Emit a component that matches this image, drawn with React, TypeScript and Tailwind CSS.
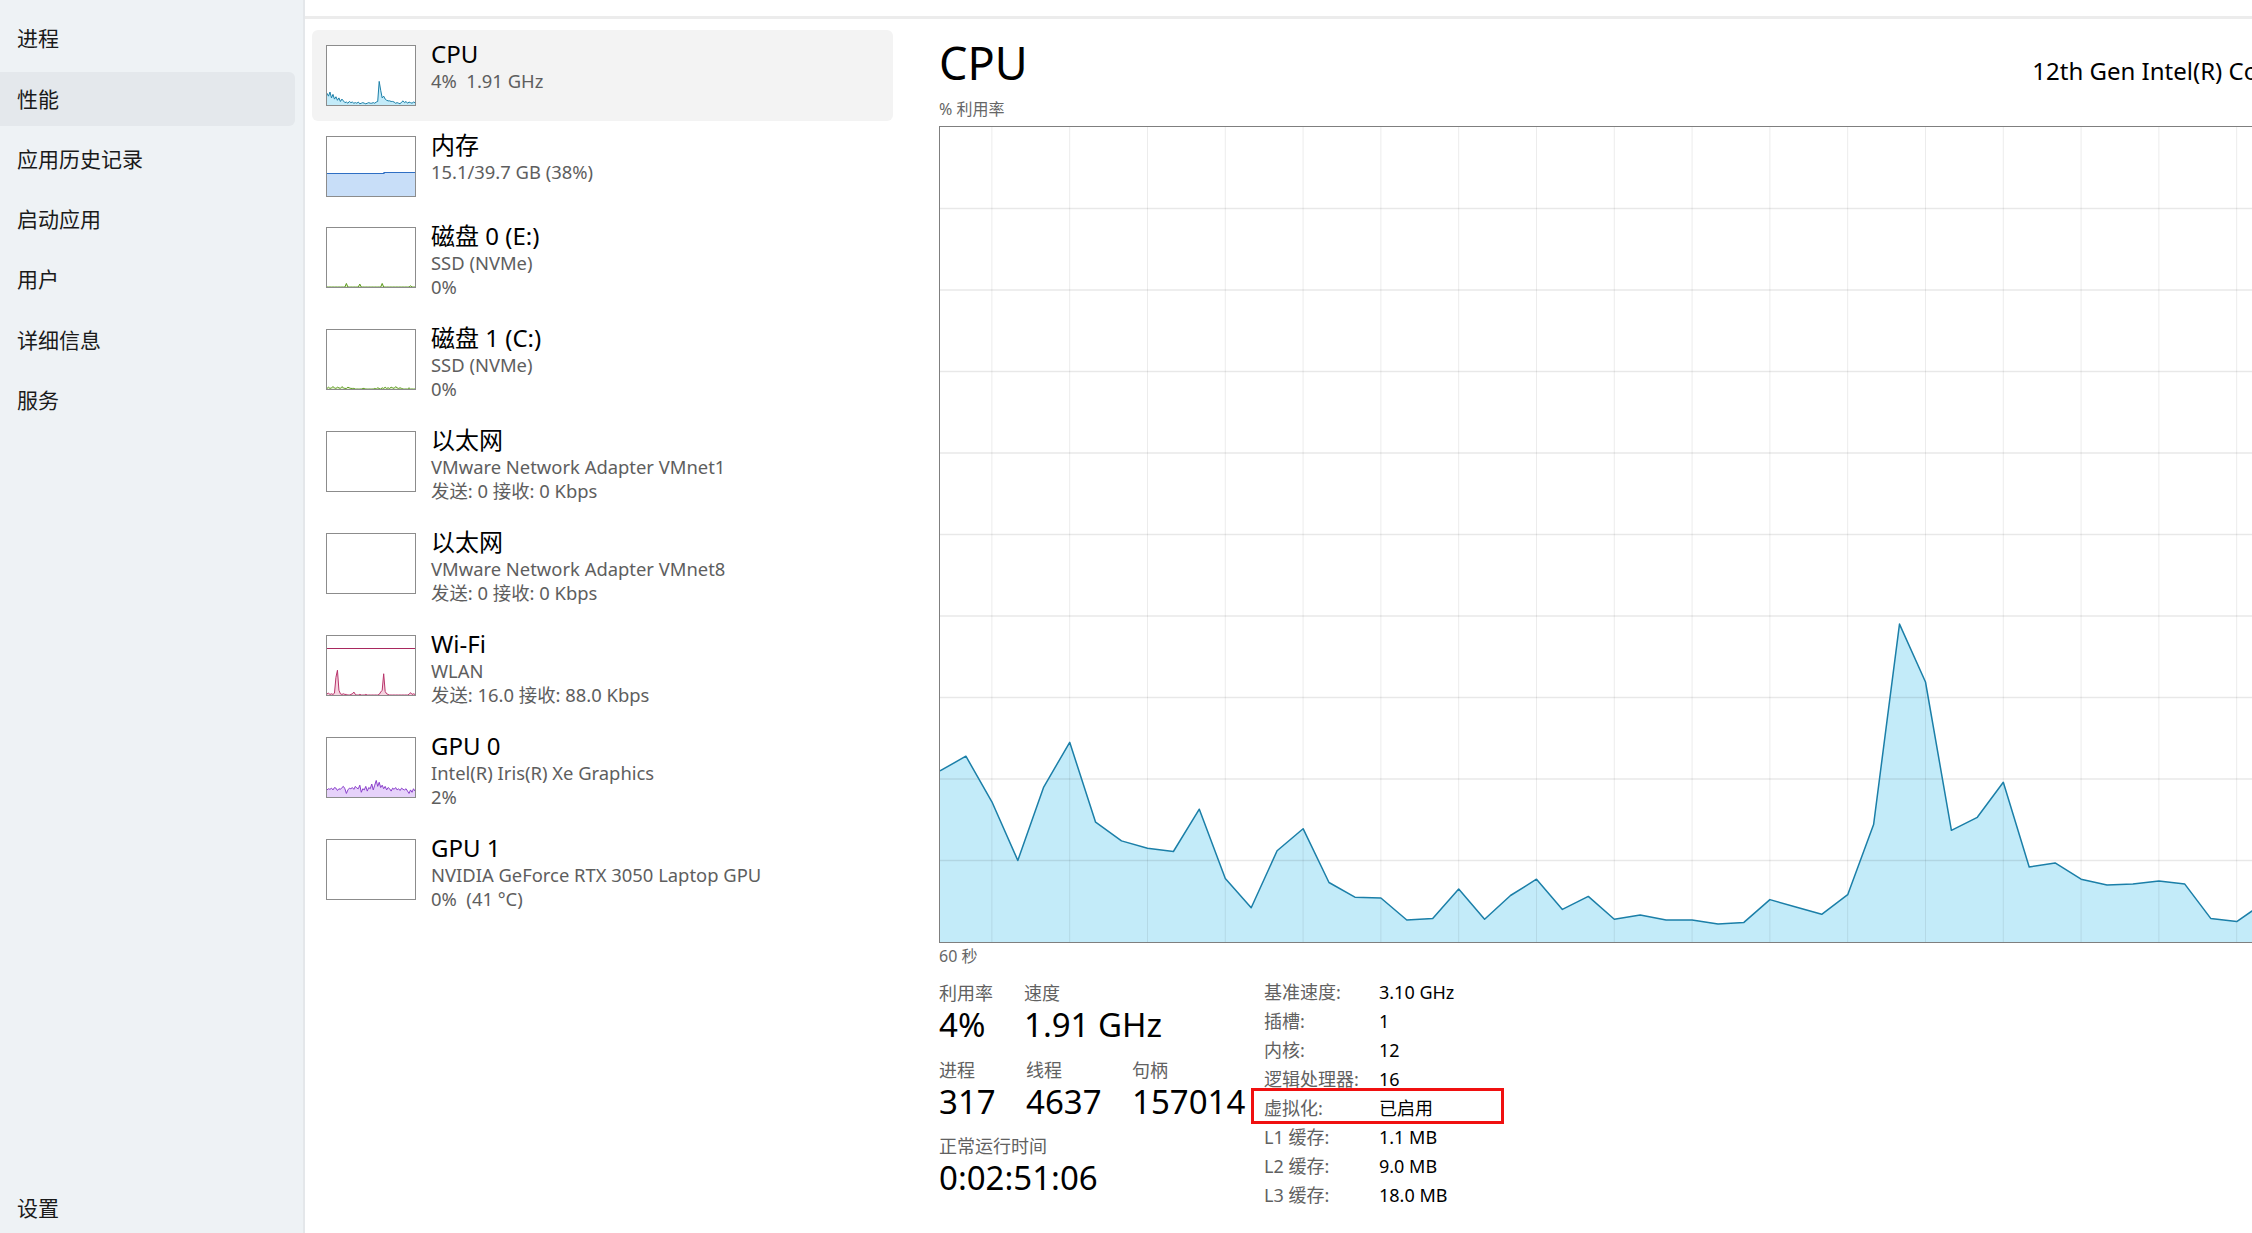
import React from "react";

const navItems = ["进程", "性能", "应用历史记录", "启动应用", "用户", "详细信息", "服务"];

// cpu history, one value per second (percent)
const cpuHistory = [
  21.0, 22.8, 17.2, 10.0, 19.0, 24.5, 14.7, 12.4, 11.5, 11.1, 16.3, 7.8, 4.2, 11.2, 13.9, 7.3, 5.5, 5.4, 2.7, 2.9,
  6.5, 2.8, 5.7, 7.7, 4.0, 5.6, 2.8, 3.3, 2.7, 2.7, 2.2, 2.4, 5.2, 4.3, 3.4, 5.8, 14.4, 39.0, 31.9, 13.7,
  15.3, 19.6, 9.2, 9.7, 7.7, 7.0, 7.1, 7.5, 7.1, 2.9, 2.5, 4.7, 4.2, 3.8, 5.5, 4.1, 3.6, 4.8, 5.2, 4.4, 4.0,
];

const cpuThumb = [
  20, 15, 22, 12, 18, 10, 14, 8, 12, 6, 10, 7, 4, 5, 3, 6, 4, 5, 3, 4, 3, 5, 2, 3, 4, 3, 2, 3, 4, 3, 3, 4, 3, 5, 6, 40,
  25, 12, 15, 10, 8, 7, 7, 6, 6, 5, 3, 4, 3, 2, 5, 7, 4, 6, 3, 5, 4, 3, 5, 4,
];
const gpuThumb = [
  12, 14, 13, 15, 12, 16, 15, 11, 14, 13, 16, 18, 14, 6, 12, 15, 14, 16, 13, 18, 15, 14, 20, 8, 14, 12, 18, 10, 16, 14,
  22, 12, 20, 28, 18, 25, 16, 20, 14, 18, 12, 16, 14, 10, 15, 13, 16, 12, 14, 11, 15, 13, 12, 14, 10, 6, 12, 8, 14, 10,
];
const disk0Thumb = [
  0, 0, 0, 0, 0, 0, 0, 0, 0, 0, 0, 0, 0, 6, 0, 0, 0, 0, 0, 0, 0, 0, 5, 0, 0, 0, 0, 0, 0, 0, 0, 0, 0, 0, 0, 0, 0, 6, 0, 0,
  0, 0, 0, 0, 0, 0, 0, 0, 0, 0, 0, 0, 0, 0, 0, 0, 2, 0, 0, 0,
];
const disk1Thumb = [
  1, 3, 1, 2, 4, 2, 1, 3, 2, 1, 4, 2, 1, 1, 3, 2, 1, 1, 1, 0, 0, 0, 0, 0, 1, 1, 0, 0, 0, 0, 0, 0, 1, 0, 2, 1, 0, 2, 1, 3,
  1, 2, 1, 3, 2, 1, 4, 2, 1, 2, 1, 0, 0, 0, 0, 2, 0, 0, 0, 0,
];
const wifiThumb = [
  2, 3, 1, 2, 1, 3, 30, 42, 8, 2, 1, 2, 1, 1, 0, 0, 1, 2, 5, 1, 0, 0, 1, 0, 0, 0, 1, 0, 0, 0, 0, 0, 0, 0, 0, 1, 5, 8,
  36, 6, 2, 1, 0, 0, 0, 0, 0, 0, 0, 0, 0, 0, 0, 0, 0, 1, 4, 1, 2, 1,
];

function MiniChart({ values, stroke, fill, top }: { values?: number[]; stroke?: string; fill?: string; top?: string }) {
  const w = 88;
  const h = 59;
  const pts = values ? values.map((v, i) => `${((i / (values.length - 1)) * w).toFixed(2)},${(h - (v / 100) * h).toFixed(2)}`) : [];
  return (
    <div className="mt-[6px] h-[61px] w-[90px] shrink-0 border border-[#8c8c8c] bg-white">
      <svg width={w} height={h} viewBox={`0 0 ${w} ${h}`} className="block">
        {top && <line x1={0} y1={12.5} x2={w} y2={12.5} stroke={top} strokeWidth={1} />}
        {values && (
          <>
            <polygon points={`0,${h} ${pts.join(" ")} ${w},${h}`} fill={fill} />
            <polyline points={pts.join(" ")} fill="none" stroke={stroke} strokeWidth={1} />
          </>
        )}
      </svg>
    </div>
  );
}

function MemoryThumb() {
  return (
    <div className="mt-[6px] h-[61px] w-[90px] shrink-0 border border-[#8c8c8c] bg-white">
      <svg width={88} height={59} viewBox="0 0 88 59" className="block">
        <polygon points="0,36.5 57,36.5 57,35.5 88,35.5 88,59 0,59" fill="#c8def8" />
        <polyline points="0,36.5 57,36.5 57,35.5 88,35.5" fill="none" stroke="#2f6fc4" strokeWidth={1.2} />
      </svg>
    </div>
  );
}

type Device = { title: string; lines: string[]; thumb: React.ReactNode; active?: boolean };

const devices: Device[] = [
  { title: "CPU", lines: ["4%  1.91 GHz"], thumb: <MiniChart values={cpuThumb} stroke="#1b7fa8" fill="#c3ebf9" />, active: true },
  { title: "内存", lines: ["15.1/39.7 GB (38%)"], thumb: <MemoryThumb /> },
  { title: "磁盘 0 (E:)", lines: ["SSD (NVMe)", "0%"], thumb: <MiniChart values={disk0Thumb} stroke="#5d9a1e" fill="#e3f1cf" /> },
  { title: "磁盘 1 (C:)", lines: ["SSD (NVMe)", "0%"], thumb: <MiniChart values={disk1Thumb} stroke="#5d9a1e" fill="#e3f1cf" /> },
  { title: "以太网", lines: ["VMware Network Adapter VMnet1", "发送: 0 接收: 0 Kbps"], thumb: <MiniChart /> },
  { title: "以太网", lines: ["VMware Network Adapter VMnet8", "发送: 0 接收: 0 Kbps"], thumb: <MiniChart /> },
  {
    title: "Wi-Fi",
    lines: ["WLAN", "发送: 16.0 接收: 88.0 Kbps"],
    thumb: <MiniChart values={wifiThumb} stroke="#b8336a" fill="#f6d3e0" top="#a8285e" />,
  },
  {
    title: "GPU 0",
    lines: ["Intel(R) Iris(R) Xe Graphics", "2%"],
    thumb: <MiniChart values={gpuThumb} stroke="#8a3fcb" fill="#e6d2fa" />,
  },
  { title: "GPU 1", lines: ["NVIDIA GeForce RTX 3050 Laptop GPU", "0%  (41 °C)"], thumb: <MiniChart /> },
];

const specs: [string, string][] = [
  ["基准速度:", "3.10 GHz"],
  ["插槽:", "1"],
  ["内核:", "12"],
  ["逻辑处理器:", "16"],
  ["虚拟化:", "已启用"],
  ["L1 缓存:", "1.1 MB"],
  ["L2 缓存:", "9.0 MB"],
  ["L3 缓存:", "18.0 MB"],
];

function CpuGraph() {
  const W = 1556;
  const H = 815;
  const step = W / 60;
  const pts = cpuHistory.map((v, i) => `${(i * step).toFixed(1)},${(H - (v / 100) * H).toFixed(1)}`).join(" ");
  const vLines = Array.from({ length: 20 }, (_, k) => (2 + 3 * k) * step);
  const hLines = Array.from({ length: 9 }, (_, k) => ((k + 1) * H) / 10);
  return (
    <div className="h-[817px] w-[1558px] border border-[#7f7f7f] bg-white">
      <svg width={W} height={H} viewBox={`0 0 ${W} ${H}`} className="block">
        <polygon points={`0,${H} ${pts} ${W},${H}`} fill="#c3ebf9" />
        {vLines.map((x) => (
          <line key={`v${x}`} x1={x} y1={0} x2={x} y2={H} stroke="#000" strokeOpacity={0.08} strokeWidth={1} />
        ))}
        {hLines.map((y) => (
          <line key={`h${y}`} x1={0} y1={y} x2={W} y2={y} stroke="#000" strokeOpacity={0.09} strokeWidth={1.5} />
        ))}
        <polyline points={pts} fill="none" stroke="#1b7fa8" strokeWidth={1.5} strokeLinejoin="round" />
      </svg>
    </div>
  );
}

function Stat({ label, value, width }: { label: string; value: string; width: string }) {
  return (
    <div className={`${width} shrink-0`}>
      <div className="text-[18px] leading-[24px] text-[#616161]">{label}</div>
      <div className="text-[33px] leading-[40px] text-black">{value}</div>
    </div>
  );
}

export default function App() {
  return (
    <div className="flex h-[1233px] w-[2252px] overflow-hidden bg-white font-['Noto_Sans','Noto_Sans_CJK_SC',sans-serif] text-[#1a1a1a]">
      <aside className="flex w-[305px] shrink-0 flex-col border-r-2 border-[#e4e7ea] bg-[#eef2f5] pt-[12px]">
        <nav className="flex flex-col gap-[6.3px] pr-[8px]">
          {navItems.map((item) => (
            <div
              key={item}
              className={`flex h-[54px] items-center rounded-r-[6px] pl-[17px] text-[21px] ${item === "性能" ? "bg-[#e4e8ec]" : ""}`}
            >
              {item}
            </div>
          ))}
        </nav>
        <div className="mt-auto flex h-[48px] items-center pl-[17px] text-[21px]">设置</div>
      </aside>

      <main className="flex min-w-0 flex-1 flex-col">
        <div className="h-[19px] shrink-0 border-b-[3px] border-[#ececec]" />
        <div className="flex min-h-0 flex-1">
          <section className="w-[600px] shrink-0 pl-[7px] pt-[11px]">
            {devices.map((d, i) => (
              <div
                key={i}
                className={`flex w-[581px] items-start rounded-[6px] pb-[15px] pl-[14px] pt-[9px] ${d.active ? "bg-[#f3f3f3]" : ""}`}
              >
                {d.thumb}
                <div className="ml-[15px]">
                  <div className="text-[24px] leading-[30px] text-black">{d.title}</div>
                  {d.lines.map((l) => (
                    <div key={l} className="whitespace-pre text-[18.4px] leading-[24px] text-[#5e5e5e]">
                      {l}
                    </div>
                  ))}
                </div>
              </div>
            ))}
          </section>

          <section className="w-[1600px] shrink-0 pl-[34px] pt-[17px]">
            <div className="flex w-[1512px] items-baseline justify-between">
              <h1 className="text-[45px] leading-[54px] text-black">CPU</h1>
              <div className="whitespace-nowrap text-[24px] text-black">12th Gen Intel(R) Core(TM) i5-12500H</div>
            </div>
            <div className="mb-[7px] mt-[9px] text-[16px] leading-[20px] text-[#666]">% 利用率</div>
            <CpuGraph />
            <div className="mt-[3px] text-[16px] leading-[20px] text-[#666]">60 秒</div>

            <div className="mt-[12px] flex">
              <div className="w-[325px] shrink-0 pt-[3px]">
                <div className="flex">
                  <Stat label="利用率" value="4%" width="w-[85px]" />
                  <Stat label="速度" value="1.91 GHz" width="w-[200px]" />
                </div>
                <div className="mt-[13px] flex">
                  <Stat label="进程" value="317" width="w-[87px]" />
                  <Stat label="线程" value="4637" width="w-[106px]" />
                  <Stat label="句柄" value="157014" width="w-[130px]" />
                </div>
                <div className="mt-[12px]">
                  <Stat label="正常运行时间" value="0:02:51:06" width="w-[300px]" />
                </div>
              </div>

              <div className="flex flex-col">
                {specs.map(([k, v]) => (
                  <div key={k} className="relative flex h-[29px] items-center text-[18px]">
                    <span className="w-[115px] text-[#616161]">{k}</span>
                    <span className="text-black">{v}</span>
                    {k === "虚拟化:" && (
                      <div className="absolute left-[-13px] top-[-6px] h-[36px] w-[253px] border-[3px] border-[#f01010]" />
                    )}
                  </div>
                ))}
              </div>
            </div>
          </section>
        </div>
      </main>
    </div>
  );
}
